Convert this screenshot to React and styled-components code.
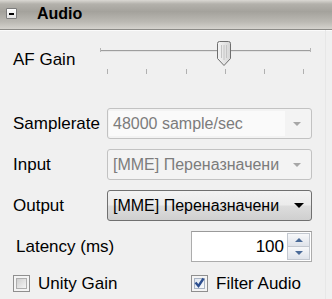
import React from 'react';
import styled, { createGlobalStyle } from 'styled-components';

const Global = createGlobalStyle`
  html, body { margin: 0; padding: 0; background: #f0f0f0; }
  #root { width: 332px; height: 299px; overflow: hidden; }
`;

const Panel = styled.div`
  width: 332px;
  height: 299px;
  background: #f0f0f0;
  font-family: "Liberation Sans", Arial, sans-serif;
  color: #000;
  display: flex;
  flex-direction: column;
  overflow: hidden;
`;

const Header = styled.div`
  height: 29px;
  flex: none;
  border-bottom: 1px solid #8c8b87;
  box-shadow: 0 1px 0 #fbfbfb;
  background: linear-gradient(to bottom, #dad8d3 0%, #b3b1ab 14%, #a4a29c 40%, #bbb9b3 75%, #d4d2cd 100%);
  display: flex;
  align-items: center;
  padding-left: 6px;
  gap: 20px;
`;

const Collapse = styled.div`
  width: 9px;
  height: 9px;
  border: 1px solid #7c7c7c;
  border-radius: 1px;
  background: linear-gradient(#ffffff, #e4e4e4);
  display: flex;
  align-items: center;
  justify-content: center;
  margin-top: -2px;
  &::after {
    content: "";
    width: 5px;
    height: 2px;
    background: #000;
  }
`;

const Title = styled.div`
  font-weight: bold;
  font-size: 16px;
  line-height: 18px;
  margin-top: -1px;
`;

const Body = styled.div`
  flex: 1;
  padding: 0 0 0 13px;
  display: flex;
  flex-direction: column;
  border-right: 1px solid #e7e7e7;
  width: 312px;
`;

const SliderRow = styled.div`
  display: flex;
  margin-top: 8px;
  height: 40px;
`;

const Label = styled.div`
  font-size: 17px;
  line-height: 19px;
  width: ${p => p.$w || 94}px;
  padding-left: ${p => p.$indent || 0}px;
  padding-top: ${p => p.$top || 0}px;
  box-sizing: border-box;
  white-space: nowrap;
  flex: none;
`;

const Slider = styled.div`
  position: relative;
  width: 212px;
  height: 40px;
`;

const Track = styled.div`
  position: absolute;
  left: 0;
  right: 1px;
  top: 12px;
  height: 1px;
  background: #9e9e9e;
  border-bottom: 1px solid #e2e2e2;
  &::before, &::after {
    content: "";
    position: absolute;
    top: -2px;
    width: 1px;
    height: 4px;
    background: #b4b4b4;
  }
  &::before { left: 0; }
  &::after { right: 0; }
`;

const Tick = styled.div`
  position: absolute;
  top: 31px;
  width: 1px;
  height: 5px;
  background: #b0b0b0;
`;

const Thumb = styled.svg`
  position: absolute;
  top: 3px;
  width: 16px;
  height: 26px;
`;

const Form = styled.div`
  display: grid;
  grid-template-columns: 94px 205px;
  grid-auto-rows: 31px;
  row-gap: 10px;
  margin-top: 30px;
  align-items: center;
`;

const Combo = styled.div`
  height: 31px;
  box-sizing: border-box;
  border: 1px solid ${p => (p.$enabled ? '#707070' : '#c2c2c2')};
  border-radius: 3px;
  background: ${p =>
    p.$enabled
      ? 'linear-gradient(to bottom, #f3f3f3 0%, #ebebeb 48%, #dddddd 52%, #cfcfcf 100%)'
      : '#f3f3f3'};
  display: flex;
  align-items: stretch;
  color: ${p => (p.$enabled ? '#000' : '#7c7c7c')};
  font-size: 16px;
  overflow: hidden;
`;

const ComboText = styled.div`
  flex: 1;
  display: flex;
  align-items: center;
  padding-left: 4px;
  margin: 2px 0 2px 1px;
  background: ${p => (p.$field ? '#fafafa' : 'transparent')};
  white-space: nowrap;
  overflow: hidden;
  min-width: 0;
`;

const ArrowBox = styled.div`
  width: 26px;
  flex: none;
  display: flex;
  align-items: center;
  justify-content: center;
`;

const Arrow = styled.div`
  width: 0;
  height: 0;
  border-left: ${p => (p.$enabled ? 5 : 4.5)}px solid transparent;
  border-right: ${p => (p.$enabled ? 5 : 4.5)}px solid transparent;
  border-top: ${p => (p.$enabled ? 5 : 4)}px solid ${p => (p.$enabled ? '#000' : '#a6a6a6')};
  margin-left: ${p => (p.$enabled ? 2 : -2)}px;
`;

const LatencyRow = styled.div`
  display: flex;
  align-items: center;
  justify-content: space-between;
  width: 299px;
  margin-top: 10px;
  height: 31px;
`;

const Spin = styled.div`
  width: 121px;
  height: 31px;
  box-sizing: border-box;
  border: 1px solid #acacac;
  border-top-color: #9a9a9a;
  background: #fff;
  display: flex;
  align-items: stretch;
  padding: 1px;
`;

const SpinValue = styled.div`
  flex: 1;
  text-align: right;
  font-size: 17px;
  line-height: 27px;
  padding-right: 3px;
`;

const SpinButtons = styled.div`
  width: 23px;
  display: flex;
  flex-direction: column;
`;

const SpinButton = styled.div`
  flex: 1;
  border: 1px solid #c3c8d0;
  background: linear-gradient(to bottom, #f7f8fa, #dfe3ea);
  display: flex;
  align-items: center;
  justify-content: center;
  & + & { border-top: none; }
  &::after {
    content: "";
    border-left: 4px solid transparent;
    border-right: 4px solid transparent;
    ${p => (p.$up ? 'border-bottom' : 'border-top')}: 4px solid #4a6a98;
  }
`;

const CheckRow = styled.div`
  display: grid;
  grid-template-columns: 178px 1fr;
  margin-top: 12px;
  align-items: center;
`;

const Check = styled.label`
  display: flex;
  align-items: center;
  gap: 8px;
  font-size: 17px;
  line-height: 19px;
  white-space: nowrap;
`;

const Box = styled.div`
  width: 17px;
  height: 17px;
  box-sizing: border-box;
  border: 1px solid #8f8f8f;
  background: #f4f4f4;
  padding: 2px;
  flex: none;
  & > div {
    width: 100%;
    height: 100%;
    box-sizing: border-box;
    border: 1px solid ${p => (p.$checked ? '#a9b4c4' : '#aeaeae')};
    background: ${p =>
      p.$checked
        ? 'linear-gradient(135deg, #dfe6ef, #f8fafc)'
        : 'linear-gradient(135deg, #cfcfcf, #f4f4f4)'};
    position: relative;
  }
`;

const CheckMark = styled.svg`
  position: absolute;
  left: -2px;
  top: -3px;
  width: 13px;
  height: 13px;
`;

function ComboBox({ enabled, field, text }) {
  return (
    <Combo $enabled={enabled}>
      <ComboText $field={field}>{text}</ComboText>
      <ArrowBox>
        <Arrow $enabled={enabled} />
      </ArrowBox>
    </Combo>
  );
}

export default function App() {
  const ticks = [7, 46, 86, 125, 164, 203];
  return (
    <>
      <Global />
      <Panel>
        <Header>
          <Collapse />
          <Title>Audio</Title>
        </Header>
        <Body>
          <SliderRow>
            <Label $w={87} $top={12}>AF Gain</Label>
            <Slider>
              <Track />
              {ticks.map(t => (
                <Tick key={t} style={{ left: t }} />
              ))}
              <Thumb viewBox="0 0 16 26" style={{ left: 116 }}>
                <defs>
                  <linearGradient id="tg" x1="0" x2="1" y1="0" y2="0">
                    <stop offset="0" stopColor="#f4f4f4" />
                    <stop offset="0.5" stopColor="#e6e6e6" />
                    <stop offset="1" stopColor="#d4d4d4" />
                  </linearGradient>
                </defs>
                <path
                  d="M1.5 2.5 Q1.5 0.5 3.5 0.5 H12.5 Q14.5 0.5 14.5 2.5 V17.5 L8 24.5 L1.5 17.5 Z"
                  fill="url(#tg)"
                  stroke="#6e6e6e"
                  strokeWidth="1"
                />
                <path d="M5.5 4 V17 M8 4 V19 M10.5 4 V17" stroke="#c4c4c4" strokeWidth="1" />
              </Thumb>
            </Slider>
          </SliderRow>

          <Form>
            <Label>Samplerate</Label>
            <ComboBox field text="48000 sample/sec" />
            <Label>Input</Label>
            <ComboBox text="[MME] Переназначени" />
            <Label>Output</Label>
            <ComboBox enabled text="[MME] Переназначени" />
          </Form>

          <LatencyRow>
            <Label $indent={3} $w={150}>Latency (ms)</Label>
            <Spin>
              <SpinValue>100</SpinValue>
              <SpinButtons>
                <SpinButton $up />
                <SpinButton />
              </SpinButtons>
            </Spin>
          </LatencyRow>

          <CheckRow>
            <Check>
              <Box>
                <div />
              </Box>
              Unity Gain
            </Check>
            <Check>
              <Box $checked>
                <div>
                  <CheckMark viewBox="0 0 13 13">
                    <path d="M2.5 6.5 L5.5 10 L10.5 2.5" fill="none" stroke="#2d4f8f" strokeWidth="2.4" />
                  </CheckMark>
                </div>
              </Box>
              Filter Audio
            </Check>
          </CheckRow>
        </Body>
      </Panel>
    </>
  );
}
